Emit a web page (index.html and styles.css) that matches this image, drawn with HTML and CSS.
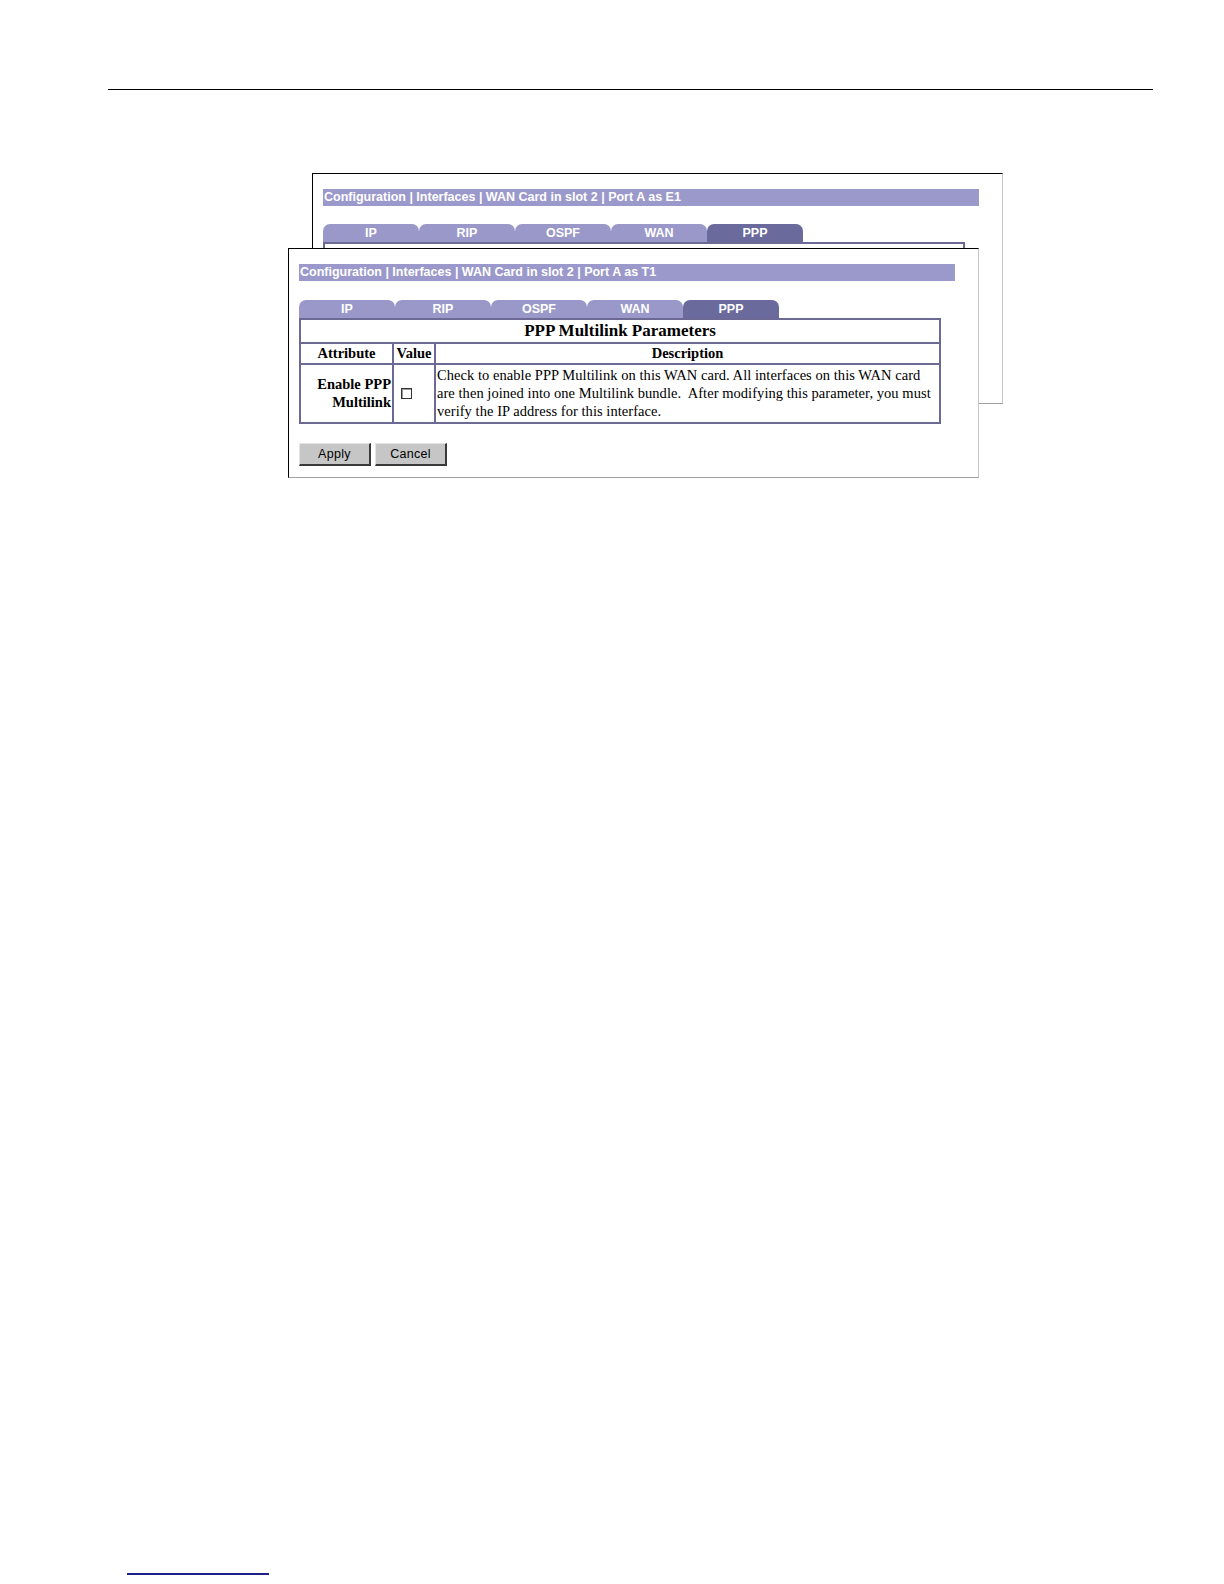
FILE: index.html
```html
<!DOCTYPE html>
<html lang="en">
<head>
    <meta charset="UTF-8">
    <title>PPP Multilink Parameters</title>
    <link rel="stylesheet" href="styles.css">
</head>
<body>
    <div class="page">
        <div class="top-rule"></div>

        <div class="figure">
            <!-- window behind: Port A as E1 -->
            <div class="window back">
                <div class="title-bar">Configuration | Interfaces | WAN Card in slot 2 | Port A as E1</div>
                <div class="tabs">
                    <div class="tab">IP</div>
                    <div class="tab">RIP</div>
                    <div class="tab">OSPF</div>
                    <div class="tab">WAN</div>
                    <div class="tab active">PPP</div>
                </div>
                <div class="panel-box"></div>
            </div>

            <!-- window in front: Port A as T1 -->
            <div class="window front">
                <div class="title-bar">Configuration | Interfaces | WAN Card in slot 2 | Port A as T1</div>
                <div class="tabs">
                    <div class="tab">IP</div>
                    <div class="tab">RIP</div>
                    <div class="tab">OSPF</div>
                    <div class="tab">WAN</div>
                    <div class="tab active">PPP</div>
                </div>
                <table class="params">
                    <colgroup>
                        <col class="col-attr">
                        <col class="col-value">
                        <col>
                    </colgroup>
                    <tr>
                        <th class="caption" colspan="3">PPP Multilink Parameters</th>
                    </tr>
                    <tr class="head">
                        <th>Attribute</th>
                        <th>Value</th>
                        <th>Description</th>
                    </tr>
                    <tr class="row">
                        <td class="attr">Enable PPP<br>Multilink</td>
                        <td class="value"><span class="checkbox"></span></td>
                        <td class="desc">Check to enable PPP Multilink on this WAN card. All interfaces on this WAN card are then joined into one Multilink bundle.&nbsp; After modifying this parameter, you must verify the IP address for this interface.</td>
                    </tr>
                </table>
                <div class="buttons">
                    <button class="btn">Apply</button>
                    <button class="btn">Cancel</button>
                </div>
            </div>
        </div>

        <div class="foot-rule"></div>
    </div>
</body>
</html>
```

FILE: styles.css
```css
body {
    margin: 0;
    background-color: #fff;
    font-family: "Liberation Serif", "Times New Roman", serif;
}

.page {
    padding-top: 89px;
}

.top-rule {
    margin-left: 108px;
    width: 1045px;
    height: 0;
    border-top: 1px solid #000;
}

.figure {
    position: relative;
    margin-top: 83px;
    margin-left: 288px;
    width: 715px;
    height: 305px;
}

.window {
    position: absolute;
    box-sizing: border-box;
    background-color: #fff;
    border-top: 1px solid #000;
    border-left: 1px solid #000;
    border-right: 1px solid #c4c4c4;
    border-bottom: 1px solid #a0a0a0;
    padding: 15px 0 0 10px;
}

.window.back {
    left: 24px;
    top: 0;
    width: 691px;
    height: 231px;
}

.window.front {
    left: 0;
    top: 75px;
    width: 691px;
    height: 230px;
}

.title-bar {
    width: 656px;
    height: 17px;
    line-height: 17px;
    background-color: #9b99cb;
    color: #fff;
    font-family: "Liberation Sans", Arial, sans-serif;
    font-size: 12.5px;
    font-weight: bold;
    padding-left: 1px;
    box-sizing: border-box;
    white-space: nowrap;
}

.tabs {
    display: flex;
    margin-top: 18px;
    height: 18px;
}

.front .tabs {
    margin-top: 19px;
}

.tab {
    width: 96px;
    height: 18px;
    line-height: 19px;
    background-color: #9a98c9;
    color: #fff;
    font-family: "Liberation Sans", Arial, sans-serif;
    font-size: 12.5px;
    font-weight: bold;
    text-align: center;
    border-radius: 7px 7px 0 0;
}

.tab.active {
    background-color: #6b6a9d;
}

.panel-box {
    width: 642px;
    height: 20px;
    box-sizing: border-box;
    border: 2px solid #6c6a94;
    border-bottom: none;
}

.params {
    width: 642px;
    table-layout: fixed;
    border-collapse: collapse;
    border: 2px solid #6c6a94;
    font-size: 14.5px;
    color: #000;
}

.col-attr {
    width: 93px;
}

.col-value {
    width: 42px;
}

.params th,
.params td {
    border: 2px solid #6c6a94;
    padding: 0 1px;
}

.caption {
    font-size: 17px;
    font-weight: bold;
    text-align: center;
    line-height: 22px;
}

.head th {
    line-height: 19px;
    font-weight: bold;
    text-align: center;
}

.row td {
    line-height: 18px;
    padding-top: 1px;
    padding-bottom: 2px;
}

.attr {
    font-weight: bold;
    text-align: right;
    vertical-align: middle;
}

.value {
    vertical-align: middle;
}

.checkbox {
    display: block;
    box-sizing: border-box;
    width: 11px;
    height: 11px;
    margin-left: 6px;
    border: 1px solid #333;
    background-color: #fff;
    box-shadow: inset 1px 1px 0 #999;
}

.desc {
    vertical-align: top;
    letter-spacing: 0.05px;
}

.buttons {
    display: flex;
    gap: 4px;
    margin-top: 19px;
}

.btn {
    width: 72px;
    height: 23px;
    padding: 0;
    background-color: #c6c6c6;
    border-top: 1px solid #e4e4e4;
    border-left: 1px solid #e4e4e4;
    border-right: 2px solid #3a3a3a;
    border-bottom: 2px solid #3a3a3a;
    font-family: "Liberation Sans", Arial, sans-serif;
    font-size: 12.5px;
    letter-spacing: 0.3px;
    color: #000;
}

.foot-rule {
    margin-top: 1095px;
    margin-left: 127px;
    width: 142px;
    height: 2px;
    background-color: #1f1f8a;
}
```
